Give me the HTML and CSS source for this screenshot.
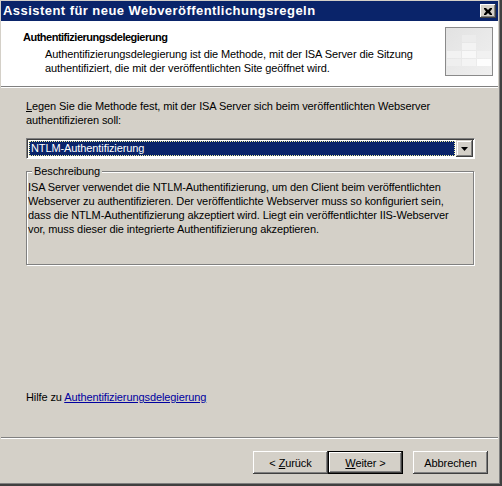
FILE: index.html
```html
<!DOCTYPE html>
<html lang="de">
<head>
<meta charset="utf-8">
<title>Assistent für neue Webveröffentlichungsregeln</title>
<link rel="stylesheet" href="styles.css">
</head>
<body>
<div class="window">
  <div class="titlebar">
    <span class="title">Assistent für neue Webveröffentlichungsregeln</span>
    <span class="close"><svg width="8" height="7" viewBox="0 0 8 7"><path d="M0 0h2l2 2 2-2h2v1L6 3.5 8 6v1H6L4 5 2 7H0V6l2-2.5L0 1z" fill="#000"/></svg></span>
  </div>
  <div class="header">
    <div class="htext">
      <div class="htitle">Authentifizierungsdelegierung</div>
      <div class="hdesc">Authentifizierungsdelegierung ist die Methode, mit der ISA Server die Sitzung authentifiziert, die mit der veröffentlichten Site geöffnet wird.</div>
    </div>
    <div class="hicon">
      <svg width="48" height="49" viewBox="0 0 48 49">
        <defs>
          <linearGradient id="g" x1="0" y1="0" x2="1" y2="1">
            <stop offset="0" stop-color="#e2e2e2"/>
            <stop offset="1" stop-color="#f0f0f0"/>
          </linearGradient>
        </defs>
        <rect x="0.5" y="0.5" width="47" height="48" fill="url(#g)" stroke="#8a8a8a"/>
        <rect x="17" y="8" width="14" height="7" fill="#ececec"/>
        <rect x="17" y="16" width="14" height="7" fill="#f3f3f3"/>
        <rect x="2" y="24" width="14" height="7" fill="#f2f2f2"/>
        <rect x="17" y="24" width="14" height="7" fill="#f8f8f8"/>
        <rect x="32" y="24" width="14" height="7" fill="#f1f1f1"/>
        <rect x="2" y="32" width="14" height="7" fill="#efefef"/>
        <rect x="17" y="32" width="14" height="7" fill="#f4f4f4"/>
        <rect x="32" y="32" width="14" height="7" fill="#fdfdfd"/>
      </svg>
    </div>
  </div>
  <div class="hsep"></div>
  <div class="content">
    <p class="prompt">Legen Sie die Methode fest, mit der ISA Server sich beim veröffentlichten Webserver authentifizieren soll:</p>
    <div class="combo">
      <div class="combo-value"><span>NTLM-Authentifizierung</span></div>
      <div class="combo-btn"><svg width="7" height="4" viewBox="0 0 7 4"><path d="M0 0h7L3.5 4z" fill="#000"/></svg></div>
    </div>
    <fieldset class="group">
      <legend>Beschreibung</legend>
      <p>ISA Server verwendet die NTLM-Authentifizierung, um den Client beim veröffentlichten Webserver zu authentifizieren. Der veröffentlichte Webserver muss so konfiguriert sein, dass die NTLM-Authentifizierung akzeptiert wird. Liegt ein veröffentlichter IIS-Webserver vor, muss dieser die integrierte Authentifizierung akzeptieren.</p>
    </fieldset>
    <p class="help">Hilfe zu <a href="#">Authentifizierungsdelegierung</a></p>
  </div>
  <div class="fsep"></div>
  <div class="buttons">
    <span class="btn"><span>&lt; <u>Z</u>urück</span></span>
    <span class="btn default"><span><u>W</u>eiter &gt;</span></span>
    <span class="btn cancel">Abbrechen</span>
  </div>
</div>
</body>
</html>
```
FILE: styles.css
```css
html, body {
  margin: 0;
  padding: 0;
  background: #d4d0c8;
}
body {
  font-family: "Liberation Sans", Arial, sans-serif;
  font-size: 11px;
  line-height: 14px;
  color: #000;
  letter-spacing: -0.1px;
}
p { margin: 0; }

.window {
  width: 502px;
  height: 486px;
  box-sizing: border-box;
  padding: 1px 4px 2px 1px;
  display: flex;
  flex-direction: column;
  background: #d4d0c8;
  box-shadow: inset -2px -2px 0 #404040, inset -3px -3px 0 #808080;
}

.titlebar {
  height: 20px;
  flex: none;
  background: #0a246a;
  display: flex;
  align-items: center;
  justify-content: space-between;
  padding: 0 2px 0 2px;
}
.title {
  color: #fff;
  font-weight: bold;
  font-size: 13px;
  letter-spacing: 0.45px;
}
.close {
  width: 16px;
  height: 14px;
  box-sizing: border-box;
  background: #d4d0c8;
  display: flex;
  align-items: center;
  justify-content: center;
  box-shadow: inset -1px -1px 0 #404040, inset 1px 1px 0 #fff, inset -2px -2px 0 #808080;
}

.header {
  height: 65px;
  flex: none;
  background: #fff;
  display: flex;
  justify-content: space-between;
  padding: 0 5px 0 22px;
}
.htext { padding-top: 9px; }
.htitle {
  font-weight: bold;
  letter-spacing: -0.5px;
}
.hdesc {
  margin-top: 3px;
  padding-left: 22px;
  width: 400px;
}
.hicon {
  padding-top: 6px;
}
.hsep {
  flex: none;
  height: 1px;
  background: #808080;
  border-bottom: 1px solid #fff;
}

.content {
  flex: 1;
  display: flex;
  flex-direction: column;
  padding: 11px 0 0 25px;
}
.prompt { width: 440px; }
.prompt::first-letter { text-decoration: underline; }

.combo {
  margin-top: 11px;
  width: 449px;
  height: 21px;
  box-sizing: border-box;
  background: #fff;
  border: 1px solid;
  border-color: #808080 #fff #fff #808080;
  display: flex;
  padding: 1px;
  box-shadow: inset 1px 1px 0 #404040;
}
.combo-value {
  flex: 1;
  padding: 1px;
  display: flex;
}
.combo-value span {
  flex: 1;
  background: #0a246a;
  color: #fff;
  outline: 1px dotted #f0f0a0;
  outline-offset: -1px;
  padding-left: 2px;
  line-height: 15px;
}
.combo-btn {
  width: 17px;
  flex: none;
  background: #d4d0c8;
  display: flex;
  align-items: center;
  justify-content: center;
  box-shadow: inset -1px -1px 0 #404040, inset 1px 1px 0 #d4d0c8, inset -2px -2px 0 #808080, inset 2px 2px 0 #fff;
}

.group {
  margin: 5px 0 0 0;
  width: 448px;
  height: 101px;
  box-sizing: border-box;
  border: 1px solid #808080;
  padding: 0 0 0 1px;
  box-shadow: 1px 1px 0 #fff, inset 1px 1px 0 #fff;
  min-width: 0;
}
.group legend {
  margin-left: 4px;
  padding: 0 2px;
  background: #d4d0c8;
  line-height: 14px;
}
.group p {
  margin-top: 2px;
  width: 440px;
}

.help {
  margin-top: auto;
  margin-bottom: 33px;
}
.help a { color: #0000a0; }

.fsep {
  flex: none;
  height: 1px;
  background: #808080;
  border-bottom: 1px solid #fff;
}
.buttons {
  flex: none;
  height: 45px;
  box-sizing: border-box;
  padding: 12px 10px 0 0;
  display: flex;
  justify-content: flex-end;
  align-items: flex-start;
}
.btn {
  width: 75px;
  height: 23px;
  box-sizing: border-box;
  display: flex;
  align-items: center;
  justify-content: center;
  background: #d4d0c8;
  box-shadow: inset -1px -1px 0 #404040, inset 1px 1px 0 #fff, inset -2px -2px 0 #808080;
}
.btn.default {
  border: 1px solid #000;
}
.btn.cancel { margin-left: 10px; }
```
